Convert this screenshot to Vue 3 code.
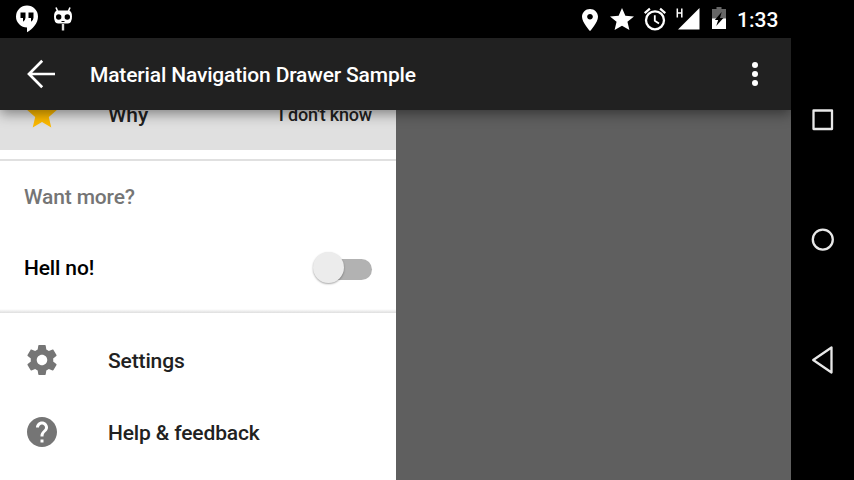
<script setup>
const gear = 'M19.43 12.98c.04-.32.07-.64.07-.98s-.03-.66-.07-.98l2.11-1.65c.19-.15.24-.42.12-.64l-2-3.46c-.12-.22-.39-.3-.61-.22l-2.49 1c-.52-.4-1.08-.73-1.69-.98l-.38-2.65C14.46 2.18 14.25 2 14 2h-4c-.25 0-.46.18-.49.42l-.38 2.65c-.61.25-1.17.59-1.69.98l-2.49-1c-.23-.09-.49 0-.61.22l-2 3.46c-.13.22-.07.49.12.64l2.11 1.65c-.04.32-.07.65-.07.98s.03.66.07.98l-2.11 1.65c-.19.15-.24.42-.12.64l2 3.46c.12.22.39.3.61.22l2.49-1c.52.4 1.08.73 1.69.98l.38 2.65c.03.24.24.42.49.42h4c.25 0 .46-.18.49-.42l.38-2.65c.61-.25 1.17-.59 1.69-.98l2.49 1c.23.09.49 0 .61-.22l2-3.46c.12-.22.07-.49-.12-.64l-2.11-1.65zM12 15.5c-1.93 0-3.5-1.57-3.5-3.5s1.57-3.5 3.5-3.5 3.5 1.57 3.5 3.5-1.57 3.5-3.5 3.5z'
const help = 'M12 2C6.48 2 2 6.48 2 12s4.48 10 10 10 10-4.48 10-10S17.52 2 12 2zm1 17h-2v-2h2v2zm2.07-7.75l-.9.92C13.45 12.9 13 13.5 13 15h-2v-.5c0-1.1.45-2.1 1.17-2.83l1.24-1.26c.37-.36.59-.86.59-1.41 0-1.1-.9-2-2-2s-2 .9-2 2H8c0-2.21 1.79-4 4-4s4 1.79 4 4c0 .88-.36 1.68-.93 2.25z'
const star = 'M12 17.27L18.18 21l-1.64-7.03L22 9.24l-7.19-.61L12 2 9.19 8.63 2 9.24l5.46 4.73L5.82 21z'
const footer = [
  { label: 'Settings', icon: gear },
  { label: 'Help & feedback', icon: help },
]
</script>

<template>
  <div class="device">
    <div class="screen">
      <header class="status">
        <div class="notifications">
          <svg width="24" height="28" viewBox="0 0 24 28">
            <path fill="#fff" d="M12 0.5a11 11 0 0 1 11 11c0 7-5.500 12.500-11 15.800v-4.800a11 11 0 0 1 0-22z" />
            <path fill="#000" d="M5.500 7.500h5v5.200q0 2.500-2.500 4v-3.700H5.500zM13.500 7.500h5v5.200q0 2.500-2.500 4v-3.700h-2.500z" />
          </svg>
          <svg width="20" height="26" viewBox="0 0 20 26">
            <path d="M3 2.500 4.500 6M17 2.500 15.500 6" fill="none" stroke="#fff" stroke-width="1.600" />
            <path d="M10 19v6.500" stroke="#ddd" stroke-width="2.400" />
            <path fill="#fff" d="M4 5.500h12q3 1 3 6 0 6.500-4 7H5q-4-.5-4-7Q1 6.500 4 5.500z" />
            <circle cx="5.700" cy="12" r="2.700" /><circle cx="14.300" cy="12" r="2.700" />
            <path d="M8.500 16h3v1h-3z" />
          </svg>
        </div>
        <div class="indicators">
          <svg class="pin" width="16" height="22" viewBox="5 2 14 20" preserveAspectRatio="none"><path fill="#fff" d="M12 2C8.130 2 5 5.130 5 9c0 5.250 7 13 7 13s7-7.750 7-13c0-3.870-3.130-7-7-7zm0 9.500c-1.380 0-2.500-1.120-2.500-2.500s1.120-2.500 2.500-2.500 2.500 1.120 2.500 2.500-1.120 2.500-2.500 2.500z" /></svg>
          <svg class="fav" width="24" height="22" viewBox="2 2 20 19" preserveAspectRatio="none"><path fill="#fff" :d="star" /></svg>
          <svg class="alarm" width="24" height="24" viewBox="0 0 24 24" fill="none" stroke="#fff">
            <circle cx="12" cy="13.300" r="9" stroke-width="2.300" />
            <path d="M11.800 8.300v5.500l4.200 2.700" stroke-width="1.800" />
            <path d="M1.700 6.100 6.900 1.700M22.300 6.100 17.100 1.700" stroke-width="2.200" />
          </svg>
          <svg class="signal" width="24" height="22" viewBox="0 0 24 22">
            <path fill="#fff" d="M23.500 0v21.500H2z" />
            <path d="M1.300 .5v9M5.800 .5v9M1.300 5h4.500" stroke="#fff" stroke-width="1.500" />
          </svg>
          <svg class="battery" width="14" height="22" viewBox="0 0 14 22">
            <path fill="#666" d="M4.500 0h5v2H14v10H0V2h4.500z" />
            <path fill="#fff" d="M0 11.500h14V22H0z" />
            <path d="M9.700 5 2.800 13h3.400l-2 6 7.200-8H8z" />
          </svg>
          <span class="clock">1:33</span>
        </div>
      </header>

      <div class="toolbar">
        <svg class="back" width="30" height="30" viewBox="0 0 30 30" fill="none" stroke="#fff" stroke-width="2.700">
          <path d="M3 15h26M16.200 1.800 3 15l13.200 13.200" />
        </svg>
        <h1>Material Navigation Drawer Sample</h1>
        <svg class="more" width="6" height="24" viewBox="0 0 6 24" fill="#fff">
          <circle cx="3" cy="3" r="3" /><circle cx="3" cy="12" r="3" /><circle cx="3" cy="21" r="3" />
        </svg>
      </div>

      <main class="content">
        <nav class="drawer">
          <div class="row selected">
            <svg class="icon" viewBox="0 0 24 24"><path fill="#fcb900" :d="star" /></svg>
            <span class="label">Why</span>
            <span class="detail">I don't know</span>
          </div>
          <div class="divider"></div>
          <div class="row subheader">Want more?</div>
          <div class="row option">
            <span>Hell no!</span>
            <div class="switch"><div class="thumb"></div></div>
          </div>
          <div class="footer-shade"></div>
          <div v-for="item in footer" :key="item.label" class="row">
            <svg class="icon" viewBox="0 0 24 24"><path fill="#757575" :d="item.icon" /></svg>
            <span class="label">{{ item.label }}</span>
          </div>
        </nav>
      </main>
    </div>

    <aside class="navbar">
      <svg width="24" height="24" viewBox="0 0 24 24"><rect x="2.500" y="2.500" width="18.500" height="18.500" /></svg>
      <svg width="24" height="24" viewBox="0 0 24 24"><circle cx="11.800" cy="12.600" r="10" /></svg>
      <svg width="24" height="30" viewBox="0 0 24 30"><path d="M2.200 15 20.500 2.500v25z" /></svg>
    </aside>
  </div>
</template>

<style>
body { overflow: hidden; background: #000; }
</style>

<style scoped>
.device {
  display: flex;
  width: 854px;
  height: 480px;
  background: #000;
  font-family: Roboto, sans-serif;
  font-weight: 500;
  font-size: 21px;
  letter-spacing: -0.14px;
  color: #212121;
  overflow: hidden;
}
svg { display: block; flex: none; }
.screen { display: flex; flex-direction: column; width: 791px; }
.status {
  display: flex;
  justify-content: space-between;
  height: 38px;
  padding: 0 12px 0 15px;
}
.notifications { display: flex; gap: 14px; padding-top: 5px; }
.indicators { display: flex; align-items: flex-start; }
.pin { margin: 9px 12px 0 0; }
.fav { margin: 8px 9px 0 0; }
.alarm { margin: 7px 9px 0 0; }
.signal { margin: 8px 12px 0 0; }
.battery { margin: 7px 11px 0 0; }
.clock { line-height: 40px; color: #fff; width: 42px; white-space: nowrap; letter-spacing: 0; }
.toolbar {
  position: relative;
  z-index: 1;
  display: flex;
  align-items: center;
  height: 72px;
  padding: 0 33px 0 26px;
  box-sizing: border-box;
  background: #212121;
  box-shadow: 0 4px 12px rgba(0, 0, 0, .42);
  clip-path: inset(0 0 -20px 0);
}
h1 { flex: 1; margin: 2px 0 0 34px; font-size: 21px; font-weight: 500; letter-spacing: -0.16px; color: #fff; white-space: nowrap; }
.content { flex: 1; overflow: hidden; background: #5f5f5f; }
.drawer { width: 396px; height: 402px; margin-top: -32px; background: #fff; }
.row { display: flex; align-items: center; height: 72px; padding: 0 24px; box-sizing: border-box; white-space: nowrap; }
.icon { width: 36px; height: 36px; }
.label { flex: 1; margin: 2px 0 0 48px; }
.selected { background: #e0e0e0; }
.detail { font-size: 18px; letter-spacing: -0.2px; }
.divider { height: 2px; margin-top: 9px; background: #e0e0e0; }
.subheader { height: 71px; color: #757575; }
.option { justify-content: space-between; color: #000; }
.switch { display: flex; align-items: center; width: 54px; height: 21px; margin-top: 3px; border-radius: 11px; background: #b2b2b2; }
.thumb { flex: none; width: 31px; height: 31px; margin: -5px 0 0 -5px; border-radius: 50%; background: #ececec; box-shadow: 0 1px 2px rgba(0, 0, 0, .35); }
.footer-shade { height: 4px; margin: 5px 0 11px; background: linear-gradient(#fff, #dedede); }
.navbar { display: flex; flex-direction: column; justify-content: space-between; align-items: center; flex: 1; padding: 108px 0 105px; box-sizing: border-box; }
.navbar svg { fill: none; stroke: #e8e8e8; stroke-width: 2.3; stroke-linejoin: round; overflow: visible; }
</style>
